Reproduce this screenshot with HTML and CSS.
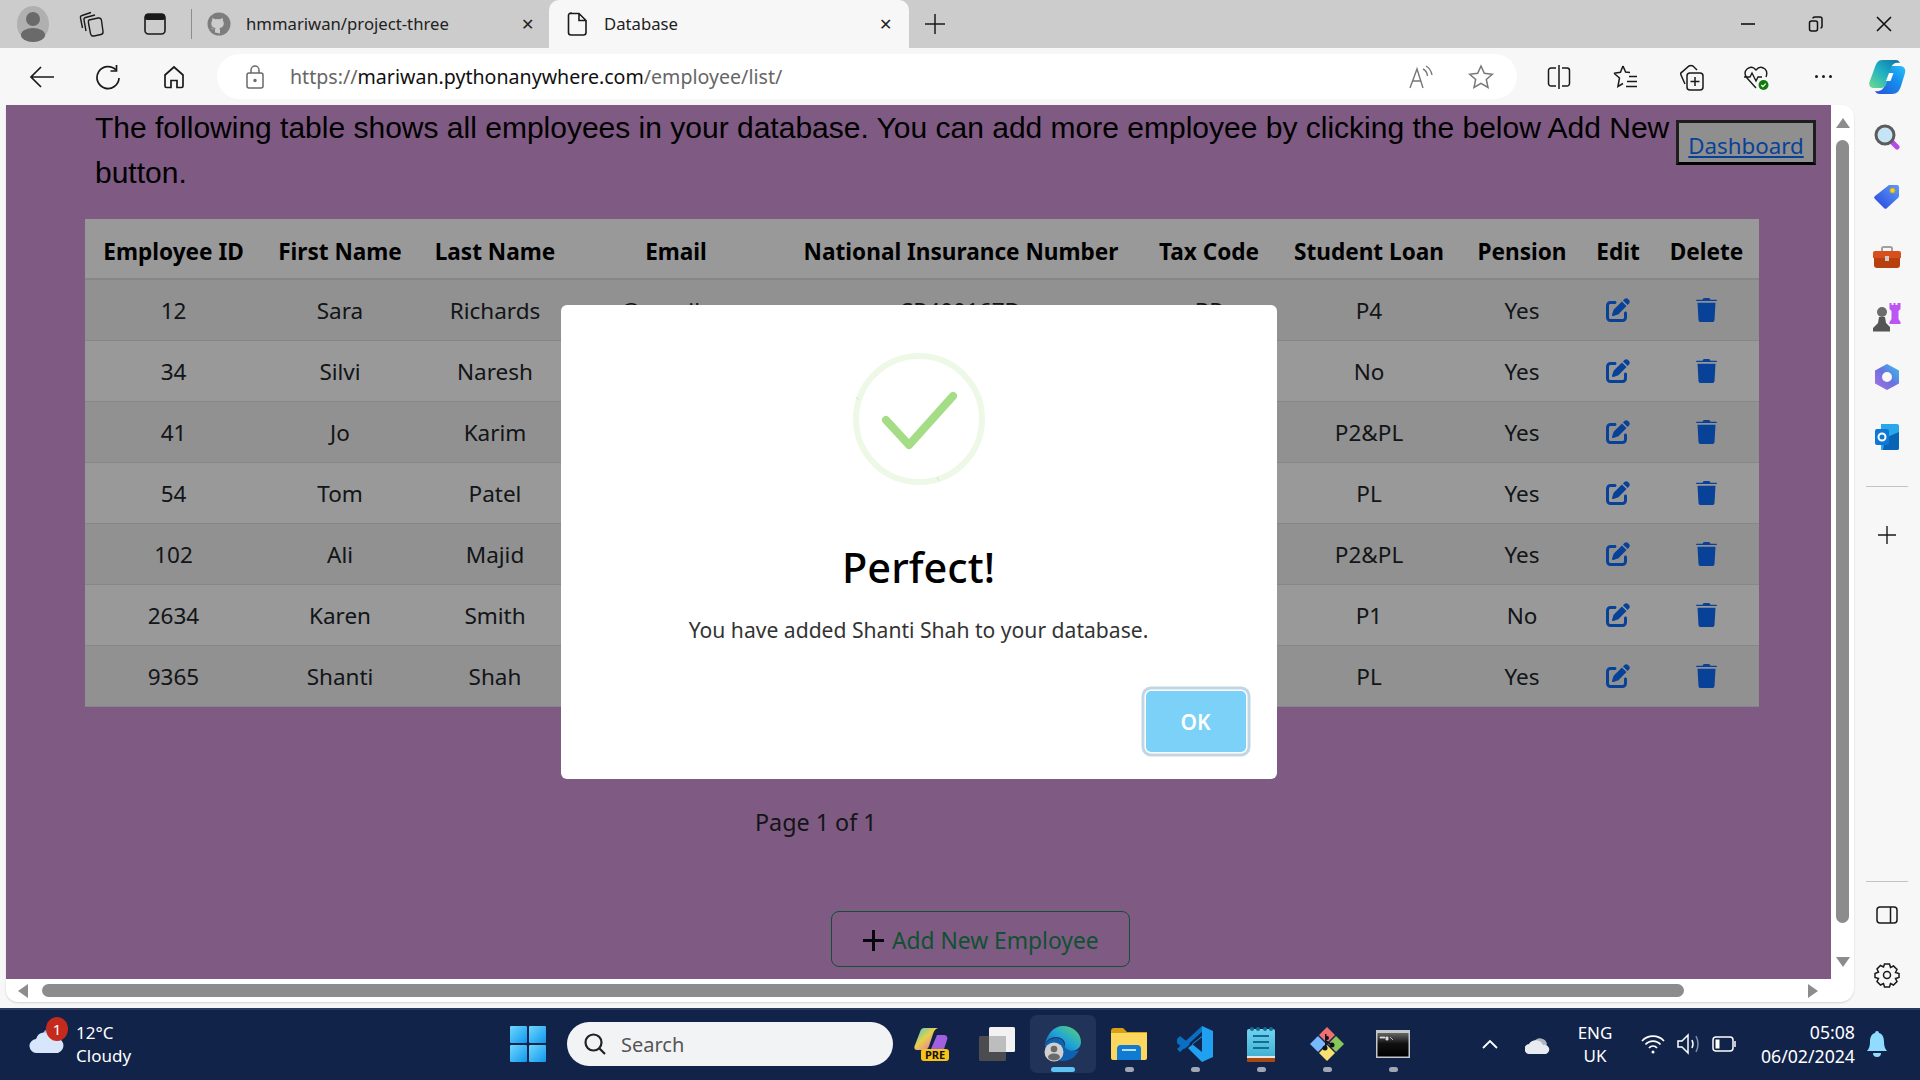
FILE: index.html
```html
<!DOCTYPE html>
<html>
<head>
  <meta charset="utf-8">
  <title>Database</title>
  <link rel="stylesheet" href="styles.css">
</head>
<body>
  <svg class="icon-defs" width="0" height="0">
    <defs>
      <symbol id="icon-edit" viewBox="0 0 512 512"><path fill="currentColor" d="M471.6 21.7c-21.9-21.9-57.3-21.9-79.2 0L362.3 51.7l97.9 97.9 30.1-30.1c21.9-21.9 21.9-57.3 0-79.2L471.6 21.7zm-299.2 220c-6.1 6.1-10.8 13.6-13.5 21.9l-29.6 88.8c-2.9 8.6-.6 18.1 5.8 24.6s15.9 8.7 24.6 5.8l88.8-29.6c8.2-2.7 15.7-7.4 21.9-13.5L437.7 172.3 339.7 74.3 172.4 241.7zM96 64C43 64 0 107 0 160V416c0 53 43 96 96 96H352c53 0 96-43 96-96V320c0-17.7-14.3-32-32-32s-32 14.3-32 32v96c0 17.7-14.3 32-32 32H96c-17.7 0-32-14.3-32-32V160c0-17.7 14.3-32 32-32h96c17.7 0 32-14.3 32-32s-14.3-32-32-32H96z"/></symbol>
      <symbol id="icon-trash" viewBox="0 0 448 512"><path fill="currentColor" d="M150 14L140 36H14C6 36 0 42 0 50s6 14 14 14H434c8 0 14-6 14-14s-6-14-14-14H308L298 14C294 5 285 0 275 0H173c-10 0-19 5-23 14zM416 100H32L53.2 467c1.6 25.3 22.6 45 47.9 45H346.9c25.3 0 46.3-19.7 47.9-45L416 100z"/></symbol>
      <linearGradient id="grad-copilot-a" x1="0" y1="1" x2="1" y2="0"><stop offset="0" stop-color="#6fdc8c"/><stop offset=".5" stop-color="#1fb0c4"/><stop offset="1" stop-color="#0f6fa5"/></linearGradient>
      <linearGradient id="grad-copilot-b" x1="0" y1="1" x2="1" y2="0"><stop offset="0" stop-color="#2a50d8"/><stop offset=".6" stop-color="#1590ee"/><stop offset="1" stop-color="#2cc0f5"/></linearGradient>
      <linearGradient id="grad-tag" x1="0" y1="1" x2="1" y2="0"><stop offset="0" stop-color="#2a45dc"/><stop offset="1" stop-color="#5c9cf8"/></linearGradient>
      <linearGradient id="grad-win" x1="0" y1="0" x2="1" y2="1"><stop offset="0" stop-color="#6fd8fb"/><stop offset="1" stop-color="#0f96f0"/></linearGradient>
      <linearGradient id="grad-edge" x1="0" y1="1" x2="1" y2="0"><stop offset="0" stop-color="#0c59a4"/><stop offset=".5" stop-color="#1fa4d8"/><stop offset="1" stop-color="#5ed66c"/></linearGradient>
      <linearGradient id="grad-m365" x1="0" y1="1" x2="1" y2="0"><stop offset="0" stop-color="#b070e0"/><stop offset=".5" stop-color="#6a70e0"/><stop offset="1" stop-color="#33c6ee"/></linearGradient>
      <linearGradient id="grad-note" x1="0" y1="0" x2="0" y2="1"><stop offset="0" stop-color="#72d2ee"/><stop offset="1" stop-color="#3eaed2"/></linearGradient>
      <linearGradient id="grad-term" x1="0" y1="0" x2="0" y2="1"><stop offset="0" stop-color="#666"/><stop offset=".45" stop-color="#111"/><stop offset="1" stop-color="#000"/></linearGradient>
      <linearGradient id="grad-pre" x1="0" y1="0" x2="1" y2="1"><stop offset="0" stop-color="#3cc8d8"/><stop offset=".45" stop-color="#e8d04a"/><stop offset="1" stop-color="#e060c8"/></linearGradient>
    </defs>
  </svg>

  <div class="window">
    <header class="tabbar">
      <div class="tab-tool tool-profile">
        <svg width="32" height="36" viewBox="0 0 32 36"><ellipse cx="16" cy="18" rx="16" ry="18" fill="#b0b0b0"/><circle cx="16" cy="13" r="7" fill="#6a6a6a"/><ellipse cx="16" cy="29" rx="12" ry="7" fill="#6a6a6a"/></svg>
      </div>
      <div class="tab-tool tool-collections">
        <svg width="26" height="26" viewBox="0 0 26 26" fill="none" stroke="#1a1a1a" stroke-width="1.400"><path d="M10 9l9-2q3-.5 3.500 2.500l1.500 11q.3 2.500-2 3l-7 1.500q-3 .5-3.500-2.500L9.500 12Q9 9.500 10 9z"/><path d="M7 20 5 9q-.5-2 1.500-2.500L16 4"/><path d="M3.500 17 1.500 7q-.5-2 1.500-2.500L12 1.500"/></svg>
      </div>
      <div class="tab-tool tool-tabs">
        <svg width="22" height="22" viewBox="0 0 22 22"><rect x="1" y="1" width="20" height="20" rx="3.500" fill="none" stroke="#1a1a1a" stroke-width="1.600"/><rect x="1" y="1" width="20" height="6" rx="2" fill="#1a1a1a"/></svg>
      </div>
      <div class="tab tab-inactive">
        <svg width="24" height="24" viewBox="0 0 24 24"><circle cx="12" cy="12" r="11.500" fill="#7d7d7d"/><path fill="#ccc" d="M8 20.500v-3c-3 .6-3.700-1.300-4-2 .5.300 1.500.700 2.200 1.700.7.900 1.600.7 1.900.4.100-.7.400-1.200.7-1.500-2.500-.3-4.500-1.300-4.500-4.800 0-1 .4-1.900 1-2.500-.1-.3-.4-1.300.1-2.500 0 0 .9-.3 2.700 1a9 9 0 0 1 4.900 0c1.800-1.300 2.700-1 2.700-1 .5 1.200.2 2.200.1 2.500.6.600 1 1.500 1 2.500 0 3.500-2.100 4.500-4.500 4.800.4.300.7.900.7 1.800v3.500z"/></svg>
        <span class="tab-title">hmmariwan/project-three</span>
        <span class="tab-close">✕</span>
      </div>
      <div class="tab tab-active">
        <svg width="22" height="24" viewBox="0 0 22 24" fill="none" stroke="#1a1a1a" stroke-width="1.600"><path d="M4 1.500h8l7 7v12a2.500 2.500 0 0 1-2.500 2.500h-12.500a2.500 2.500 0 0 1-2.500-2.500v-17a2.500 2.500 0 0 1 2.500-2.500zM12 1.500v7h7"/></svg>
        <span class="tab-title">Database</span>
        <span class="tab-close">✕</span>
      </div>
      <div class="tab-tool tool-new">
        <svg width="22" height="22" viewBox="0 0 22 22" stroke="#1a1a1a" stroke-width="1.500"><path d="M11 1v20M1 11h20"/></svg>
      </div>
      <div class="window-controls">
        <div class="win-btn"><svg width="14" height="14" viewBox="0 0 14 14" stroke="#111" stroke-width="1.600"><path d="M0 7h14"/></svg></div>
        <div class="win-btn"><svg width="16" height="16" viewBox="0 0 16 16" fill="none" stroke="#111" stroke-width="1.500"><rect x="1.500" y="5" width="8" height="10" rx="2"/><path d="M5 2.500q0-1.500 2-1.500h5q2 0 2 2v7q0 2-1.500 2"/></svg></div>
        <div class="win-btn"><svg width="16" height="16" viewBox="0 0 16 16" stroke="#111" stroke-width="1.600"><path d="M1 1l14 14M15 1L1 15"/></svg></div>
      </div>
    </header>

    <nav class="toolbar">
      <div class="nav-btn"><svg width="26" height="24" viewBox="0 0 26 24" fill="none" stroke="#1a1a1a" stroke-width="1.700"><path d="M25 12H2M12 2 2 12l10 10"/></svg></div>
      <div class="nav-btn"><svg width="24" height="26" viewBox="0 0 24 26" fill="none" stroke="#1a1a1a" stroke-width="1.700"><path d="M20 6A11 11 0 1 0 23 14"/><path d="M20.500 1v6h-6"/></svg></div>
      <div class="nav-btn"><svg width="24" height="24" viewBox="0 0 24 24" fill="none" stroke="#1a1a1a" stroke-width="1.700"><path d="M3 10 12 2l9 8v11a1.500 1.500 0 0 1-1.500 1.500H15v-7H9v7H4.500A1.500 1.500 0 0 1 3 21z"/></svg></div>
      <div class="address">
        <svg class="lock" width="18" height="24" viewBox="0 0 18 24" fill="none" stroke="#6a6a6a" stroke-width="1.500"><rect x="1" y="8" width="16" height="15" rx="2"/><path d="M5 8V5a4 4 0 0 1 8 0v3"/><circle cx="9" cy="15.500" r="1" fill="#6a6a6a"/></svg>
        <span class="url"><span class="url-dim">https://</span>mariwan.pythonanywhere.com<span class="url-dim">/employee/list/</span></span>
        <svg class="read-aloud" width="26" height="24" viewBox="0 0 26 24" fill="none" stroke="#777" stroke-width="1.400"><path d="M2 23 9 4l6 19M4.500 16h9"/><path d="M15 4q4 2 4.500 7M18 1q5 3 6 9"/></svg>
        <svg class="star" width="26" height="26" viewBox="0 0 26 26" fill="none" stroke="#777" stroke-width="1.500"><path d="M13 2l3.300 7.300 8 .9-6 5.300 1.700 7.900-7-4-7 4 1.700-7.900-6-5.300 8-.9z"/></svg>
      </div>
      <div class="toolbar-right">
        <div class="nav-btn"><svg width="24" height="24" viewBox="0 0 24 24" fill="none" stroke="#1a1a1a" stroke-width="1.500"><path d="M12 0v24M9 3H4a2.500 2.500 0 0 0-2.500 2.500v13A2.500 2.500 0 0 0 4 21h5M15 3h5a2.500 2.500 0 0 1 2.500 2.500v13A2.500 2.500 0 0 1 20 21h-5"/></svg></div>
        <div class="nav-btn"><svg width="26" height="26" viewBox="0 0 26 26" fill="none" stroke="#1a1a1a" stroke-width="1.500"><path d="M11 2l2.600 6 4.400.5M2 9.300l5.500 4.700-1.600 8.500 5.100-3M11 2 8.400 8.300 2 9.300M17 12.500h8M15 17.500h10M14 22.500h11"/></svg></div>
        <div class="nav-btn"><svg width="26" height="28" viewBox="0 0 26 28" fill="none" stroke="#1a1a1a" stroke-width="1.500"><path d="M7 21 3 12q-1-2 1-3l7-6q2-1 4 0l4 4"/><rect x="9" y="10" width="16" height="17" rx="3"/><path d="M17 14v9M12.500 18.500h9"/></svg></div>
        <div class="nav-btn"><svg width="28" height="28" viewBox="0 0 28 28" fill="none"><path stroke="#1a1a1a" stroke-width="1.400" d="M13 25 4 15q-4-5 0-9 5-4 9 1 4-5 9-1 3 3 1 8M1 14h6l2-4 4 8 2-4h4"/><circle cx="20.500" cy="22" r="5" fill="#107c10"/><path stroke="#fff" stroke-width="1.200" d="M18.300 22l1.600 1.600 2.800-3"/></svg></div>
        <div class="nav-btn nav-dots"><i></i><i></i><i></i></div>
        <div class="nav-btn nav-copilot">
          <svg width="37" height="34" viewBox="0 0 37 34"><path fill="url(#grad-copilot-b)" d="M22 6h9c4 0 6 3 5 7l-4 13c-1.500 5-4 8-9 8H11c-3 0-4-1-5-3 5 1 8-1 10-6l4-14c.5-2 1-4 2-5z"/><path fill="url(#grad-copilot-a)" d="M13 0h14c2 0 3 1 4 3-5-1-8 1-9 5l-5 17c-1 2-3 3-5 3H4c-3 0-4.500-3-3.500-6L6 7c1.500-4 3-7 7-7z"/><path fill="#fff" d="M20 13h4.500l-3 8H17z"/></svg>
        </div>
      </div>
    </nav>

    <div class="main">
      <div class="view-wrap">
        <div class="browser-view">
          <section class="page">
            <a class="dashboard-btn" href="#">Dashboard</a>
            <p class="intro">The following table shows all employees in your database. You can add more employee by clicking the below Add New button.</p>

            <table class="employee-table">
              <colgroup>
                <col class="col-id"><col class="col-first"><col class="col-last"><col class="col-email"><col class="col-ni">
                <col class="col-tax"><col class="col-loan"><col class="col-pension"><col class="col-edit"><col class="col-delete">
              </colgroup>
              <thead>
                <tr><th>Employee ID</th><th>First Name</th><th>Last Name</th><th>Email</th><th>National Insurance Number</th><th>Tax Code</th><th>Student Loan</th><th>Pension</th><th>Edit</th><th>Delete</th></tr>
              </thead>
              <tbody>
                <tr><td>12</td><td>Sara</td><td>Richards</td><td>sr@gmail.com</td><td>SR400167D</td><td>BR</td><td>P4</td><td>Yes</td><td><svg class="act-edit"><use href="#icon-edit"/></svg></td><td><svg class="act-trash"><use href="#icon-trash"/></svg></td></tr>
                <tr><td>34</td><td>Silvi</td><td>Naresh</td><td></td><td></td><td></td><td>No</td><td>Yes</td><td><svg class="act-edit"><use href="#icon-edit"/></svg></td><td><svg class="act-trash"><use href="#icon-trash"/></svg></td></tr>
                <tr><td>41</td><td>Jo</td><td>Karim</td><td></td><td></td><td></td><td>P2&amp;PL</td><td>Yes</td><td><svg class="act-edit"><use href="#icon-edit"/></svg></td><td><svg class="act-trash"><use href="#icon-trash"/></svg></td></tr>
                <tr><td>54</td><td>Tom</td><td>Patel</td><td></td><td></td><td></td><td>PL</td><td>Yes</td><td><svg class="act-edit"><use href="#icon-edit"/></svg></td><td><svg class="act-trash"><use href="#icon-trash"/></svg></td></tr>
                <tr><td>102</td><td>Ali</td><td>Majid</td><td></td><td></td><td></td><td>P2&amp;PL</td><td>Yes</td><td><svg class="act-edit"><use href="#icon-edit"/></svg></td><td><svg class="act-trash"><use href="#icon-trash"/></svg></td></tr>
                <tr><td>2634</td><td>Karen</td><td>Smith</td><td></td><td></td><td></td><td>P1</td><td>No</td><td><svg class="act-edit"><use href="#icon-edit"/></svg></td><td><svg class="act-trash"><use href="#icon-trash"/></svg></td></tr>
                <tr><td>9365</td><td>Shanti</td><td>Shah</td><td></td><td></td><td></td><td>PL</td><td>Yes</td><td><svg class="act-edit"><use href="#icon-edit"/></svg></td><td><svg class="act-trash"><use href="#icon-trash"/></svg></td></tr>
              </tbody>
            </table>

            <p class="pagination">Page 1 of 1</p>
            <a class="add-btn" href="#"><svg width="21" height="21" viewBox="0 0 21 21" stroke="#0a0a14" stroke-width="3"><path d="M10.500 0v21M0 10.500h21"/></svg>Add New Employee</a>

            <div class="overlay">
              <div class="modal">
                <svg class="success-icon" width="132" height="132" viewBox="0 0 132 132" fill="none">
                  <circle cx="66" cy="66" r="63" stroke="#edf8e7" stroke-width="6"/>
                  <path d="M3 44l3 3M84 124l2 4" stroke="#cfeec0" stroke-width="1"/>
                  <path d="M33 67 56 92 100 43" stroke="#a5dc86" stroke-width="8" stroke-linecap="round" stroke-linejoin="round"/>
                </svg>
                <h2 class="modal-title">Perfect!</h2>
                <p class="modal-text">You have added Shanti Shah to your database.</p>
                <button class="modal-ok" type="button">OK</button>
              </div>
            </div>
          </section>

          <div class="vscroll">
            <span class="arrow-up"></span>
            <span class="vthumb"></span>
            <span class="arrow-down"></span>
          </div>
          <div class="hscroll">
            <span class="arrow-left"></span>
            <span class="hthumb"></span>
            <span class="arrow-right"></span>
          </div>
        </div>
      </div>

      <aside class="sidebar">
        <div class="side-item"><svg width="26" height="26" viewBox="0 0 26 26"><path stroke="#b84ae8" stroke-width="5" stroke-linecap="round" d="M17 17l6 6"/><circle cx="11" cy="11" r="9" fill="#c6e4f6" stroke="#5c5c5c" stroke-width="3"/></svg></div>
        <div class="side-item"><svg width="26" height="26" viewBox="0 0 26 26"><path fill="url(#grad-tag)" d="M15 1h8a2 2 0 0 1 2 2v9a3 3 0 0 1-1 2L13 24a2 2 0 0 1-3 0L1 15a2 2 0 0 1 0-3z"/><circle cx="18.500" cy="6.500" r="2.500" fill="#f4d02a" stroke="#d8a810"/></svg></div>
        <div class="side-item"><svg width="28" height="22" viewBox="0 0 28 22"><path fill="none" stroke="#a0a0a0" stroke-width="2" d="M9 5V2.500q0-1.500 1.500-1.500h7Q19 1 19 2.500V5"/><path fill="#d64f1c" d="M2 5h24a2 2 0 0 1 2 2v5H0V7a2 2 0 0 1 2-2z"/><path fill="#b8400f" d="M1 12h26v7a3 3 0 0 1-3 3H4a3 3 0 0 1-3-3z"/><rect x="12" y="10" width="4" height="5" fill="#ccc"/></svg></div>
        <div class="side-item"><svg width="28" height="29" viewBox="0 0 28 29"><path fill="#bd55f5" d="M16.500 0h2v2h2V0h2v2h2V0h3v6l-2 2v8l2 3v2H16.500v-2l2-3V8l-2-2z"/><circle cx="9" cy="9" r="5" fill="#6c6c6c"/><path fill="#555" d="M6 14h6l1 6 4 4v4.500H0V25l5-5z"/></svg></div>
        <div class="side-item"><svg width="24" height="26" viewBox="0 0 24 26"><path fill="url(#grad-m365)" fill-rule="evenodd" d="M12 0 24 6.500v13L12 26 0 19.500v-13zM12 8a5 5 0 1 0 0 10 5 5 0 0 0 0-10z"/></svg></div>
        <div class="side-item"><svg width="24" height="26" viewBox="0 0 24 26"><path fill="#28a8ea" d="M6 0h16q2 0 2 2v22q0 2-2 2H6z"/><path fill="#0a64b4" d="M10 14l14-6v16q0 2-2 2H8z"/><rect x="0" y="5" width="14" height="16" rx="2" fill="#0f78d4"/><circle cx="7" cy="13" r="3.500" fill="none" stroke="#fff" stroke-width="2"/></svg></div>
        <div class="side-sep side-sep-top"></div>
        <div class="side-item"><svg width="20" height="20" viewBox="0 0 20 20" stroke="#1a1a1a" stroke-width="1.400"><path d="M10 1v18M1 10h18"/></svg></div>
        <div class="side-sep side-sep-bottom"></div>
        <div class="side-item"><svg width="22" height="18" viewBox="0 0 22 18" fill="none" stroke="#1a1a1a" stroke-width="1.500"><rect x="1" y="1" width="20" height="16" rx="3"/><path d="M14.500 1v16"/></svg></div>
        <div class="side-item"><svg width="26" height="26" viewBox="0 0 26 26" fill="none" stroke="#1a1a1a" stroke-width="1.500"><path d="M10.500 2h5l1 3.500 3-1.500 3.500 3.500-1.500 3L25 11.500v4l-3.500 1 1.500 3-3.500 3.500-3-1.500-1 3.500h-5l-1-3.500-3 1.500L3 19.500l1.500-3L1 15.500v-4l3.500-1.500L3 7l3.500-3.500 3 1.500z"/><circle cx="13" cy="13" r="3.500"/></svg></div>
      </aside>
    </div>

    <footer class="taskbar">
      <div class="weather">
        <svg class="weather-icon" width="36" height="26" viewBox="0 0 36 26"><circle cx="22" cy="10" r="9" fill="#8ab6ee"/><path fill="#d8e6fb" d="M8 26a7 7 0 0 1-1-14 9 9 0 0 1 17-1 7.500 7.500 0 0 1 5 15z"/></svg>
        <span class="weather-badge">1</span>
        <div class="weather-text"><span>12°C</span><span>Cloudy</span></div>
      </div>
      <div class="start"><svg width="36" height="36" viewBox="0 0 36 36" fill="url(#grad-win)"><rect width="17" height="17" rx="1"/><rect x="19" width="17" height="17" rx="1"/><rect y="19" width="17" height="17" rx="1"/><rect x="19" y="19" width="17" height="17" rx="1"/></svg></div>
      <div class="search">
        <svg width="24" height="24" viewBox="0 0 24 24" fill="none" stroke="#222" stroke-width="2.200"><circle cx="10.500" cy="10.500" r="8"/><path d="M16.500 16.500 22 22"/></svg>
        <span>Search</span>
      </div>
      <div class="apps">
        <div class="app">
          <svg width="36" height="36" viewBox="0 0 36 36"><path fill="url(#grad-pre)" d="M11 2h14c-3 1-4 3-5 6l-4 12c-1 3-3 4-5 4H4c-3 0-3-3-2-5L7 6c1-3 2-4 4-4z"/><path fill="#a060e0" d="M24 9h7c3 0 4 3 3 5l-3 9H18z"/><rect x="8" y="23" width="28" height="12" rx="3" fill="#f7c318"/><text class="pre-label" x="22" y="33" text-anchor="middle">PRE</text></svg>
        </div>
        <div class="app">
          <svg width="36" height="34" viewBox="0 0 36 34"><rect x="10" y="0" width="26" height="25" rx="1.500" fill="#f2f2f2"/><rect x="0" y="9" width="27" height="25" rx="1.500" fill="#4f4f4f" opacity=".95"/><rect x="10" y="9" width="17" height="16" fill="#bdbdbd"/></svg>
        </div>
        <div class="app app-active">
          <svg width="38" height="38" viewBox="0 0 38 38"><path fill="url(#grad-edge)" d="M19 1c10 0 18 7 18 16 0 6-5 9-10 9-4 0-7-2-7-4 0-1 1-1 1-3 0-4-4-7-9-7-5 0-9 3-11 7C3 9 10 1 19 1z"/><path fill="#0e62b0" d="M1 19c3-4 7-6 11-6 5 0 8 3 8 6 0 4 4 7 9 7 2 0 4 0 6-1-3 7-9 11-16 11S1 30 1 19z"/><circle cx="10" cy="27" r="9.500" fill="#d0d0d0"/><circle cx="10" cy="24" r="3.300" fill="#6a6a6a"/><ellipse cx="10" cy="32" rx="6" ry="3.500" fill="#6a6a6a"/></svg>
          <span class="app-active-bar"></span>
        </div>
        <div class="app app-open">
          <svg width="36" height="32" viewBox="0 0 36 32"><path fill="#d9a015" d="M0 3a3 3 0 0 1 3-3h9l4 4h20v6H0z"/><path fill="#fcd75e" d="M0 5h36v25a2 2 0 0 1-2 2H2a2 2 0 0 1-2-2z"/><path fill="#0f7bd2" d="M6 32V21a4 4 0 0 1 4-4h16a4 4 0 0 1 4 4v11z"/><rect x="11" y="21" width="14" height="2" fill="#b8def8"/></svg>
          <span class="app-dot"></span>
        </div>
        <div class="app app-open">
          <svg width="36" height="36" viewBox="0 0 36 36"><path fill="#0a6fc0" d="M0 13l3-3 10 8-3 3-3 2-7-6zM3 26 0 23 25 0l3 3z"/><path fill="#1fa0f0" d="M25 0l11 5v26l-11 5-14-14 14-11z M25 10 15 18l10 8z" fill-rule="evenodd"/></svg>
          <span class="app-dot"></span>
        </div>
        <div class="app app-open">
          <svg width="28" height="36" viewBox="0 0 28 36"><rect x="0" y="3" width="28" height="30" rx="2" fill="url(#grad-note)"/><rect x="0" y="31" width="28" height="5" rx="1" fill="#a84a10"/><rect x="0" y="30" width="28" height="2" fill="#e8e8e8"/><g fill="#0f6e96"><circle cx="5" cy="3" r="2"/><circle cx="11" cy="3" r="2"/><circle cx="18" cy="3" r="2"/><circle cx="24" cy="3" r="2"/><rect x="6" y="9" width="16" height="2"/><rect x="6" y="15" width="16" height="2"/><rect x="6" y="21" width="16" height="2"/></g></svg>
          <span class="app-dot"></span>
        </div>
        <div class="app app-open">
          <svg width="36" height="36" viewBox="0 0 36 36"><path fill="#f07070" d="M18 1 26 9l-8 8-8-8 6-6z"/><path fill="#78b8ff" d="M1 18l8-8 8 8-8 8z"/><path fill="#88c858" d="M19 18l8-8 8 8-8 8z"/><path fill="#f8e070" d="M10 27l8-8 8 8-8 8z"/><g fill="#112"><circle cx="18" cy="12" r="2"/><circle cx="16" cy="22" r="2.500"/><circle cx="23" cy="19" r="2.500"/><path d="M16 8h1.500v14H16zM17 14l6 4-1 1.500-5-3.500z"/></g></svg>
          <span class="app-dot"></span>
        </div>
        <div class="app app-open">
          <svg width="34" height="28" viewBox="0 0 34 28"><rect width="34" height="28" fill="#c4c8cc"/><rect x="1.500" y="3" width="31" height="23.500" fill="url(#grad-term)"/><path d="M4 7h5v1H4zM10 7h2v3h-2zM14 7l3 3" stroke="#ddd" stroke-width=".8" fill="#ddd"/></svg>
          <span class="app-dot"></span>
        </div>
      </div>
      <div class="tray">
        <svg class="tray-chevron" width="16" height="10" viewBox="0 0 16 10" fill="none" stroke="#fff" stroke-width="1.800"><path d="M1 9l7-7 7 7"/></svg>
        <svg class="tray-cloud" width="26" height="20" viewBox="0 0 26 20"><path fill="#aeb6c4" d="M9 8a7 7 0 0 1 13 2l-3 4H7z"/><path fill="#e8ebf0" d="M5 20a5 5 0 0 1-1-10 8 8 0 0 1 14 1 4.500 4.500 0 0 1 3 9z"/></svg>
        <div class="tray-lang"><span>ENG</span><span>UK</span></div>
        <svg class="tray-wifi" width="24" height="20" viewBox="0 0 24 20" fill="none" stroke="#fff" stroke-width="1.700"><path d="M1 7a15 15 0 0 1 22 0M4.500 10.500a10 10 0 0 1 15 0M8 14a5 5 0 0 1 8 0"/><circle cx="12" cy="18" r="1.500" fill="#fff" stroke="none"/></svg>
        <svg class="tray-sound" width="24" height="24" viewBox="0 0 24 24" fill="none" stroke="#fff" stroke-width="1.500"><path d="M1 9h4l6-6v18l-6-6H1z"/><path d="M15 8q2 4 0 8"/><path d="M19 4q4 8 0 16" stroke="#8290a8"/></svg>
        <svg class="tray-battery" width="24" height="16" viewBox="0 0 24 16" fill="none" stroke="#fff" stroke-width="1.500"><rect x="1" y="1" width="20" height="14" rx="3"/><rect x="3.500" y="3.500" width="4" height="9" fill="#fff" stroke="none"/><path d="M23 5v6"/></svg>
        <div class="tray-clock"><span>05:08</span><span>06/02/2024</span></div>
        <svg class="tray-bell" width="22" height="26" viewBox="0 0 22 26"><path fill="#8fdcff" d="M11 0a2 2 0 0 1 2 2c4 1 5 5 5 9 0 4 1 7 3 9H1c2-2 3-5 3-9 0-4 1-8 5-9a2 2 0 0 1 2-2z"/><path fill="#8fdcff" d="M7 22h8a4 4 0 0 1-8 0z"/></svg>
      </div>
    </footer>
  </div>
</body>
</html>
```

FILE: styles.css
```css
* {
  box-sizing: border-box;
}
html, body {
  margin: 0;
  padding: 0;
  height: 100%;
  overflow: hidden;
}
body {
  font-family: "Noto Sans", "Open Sans", sans-serif;
  color: #000;
}
.icon-defs {
  position: absolute;
}
.window {
  width: 1920px;
  height: 1080px;
  display: flex;
  flex-direction: column;
}

/* tab strip */
.tabbar {
  display: flex;
  align-items: stretch;
  height: 48px;
  background: #cccccc;
  flex-shrink: 0;
}
.tab-tool {
  display: flex;
  align-items: center;
  justify-content: center;
}
.tool-profile { width: 66px; }
.tool-collections { width: 52px; }
.tool-tabs {
  width: 74px;
  border-right: 1px solid #8e8e8e;
  margin: 9px 0;
}
.tool-new { width: 52px; }
.tab {
  display: flex;
  align-items: center;
  font-size: 16.700px;
  color: #222;
}
.tab-inactive {
  width: 357px;
  padding: 0 15px 0 15px;
}
.tab-active {
  width: 360px;
  padding: 0 17px 0 18px;
  background: #f7f7f7;
  border-radius: 10px 10px 0 0;
}
.tab-title {
  margin-left: 15px;
  padding-bottom: 2px;
}
.tab-close {
  margin-left: auto;
  font-size: 16px;
}
.window-controls {
  display: flex;
  margin-left: auto;
  padding-right: 2px;
}
.win-btn {
  width: 68px;
  display: flex;
  align-items: center;
  justify-content: center;
}

/* address row */
.toolbar {
  display: flex;
  align-items: center;
  height: 57px;
  padding-left: 9px;
  background: #f7f7f7;
  flex-shrink: 0;
}
.nav-btn {
  width: 66px;
  height: 45px;
  display: flex;
  align-items: center;
  justify-content: center;
  flex-shrink: 0;
}
.address {
  display: flex;
  align-items: center;
  width: 1300px;
  height: 45px;
  margin-left: 10px;
  padding: 0 23px 0 29px;
  background: #fff;
  border-radius: 23px;
}
.url {
  margin-left: 26px;
  font-size: 19.600px;
  color: #111;
}
.url-dim {
  color: #666;
}
.read-aloud {
  margin-left: auto;
}
.star {
  margin-left: 34px;
}
.toolbar-right {
  display: flex;
  margin-left: 9px;
}
.nav-dots {
  gap: 4px;
}
.nav-dots i {
  width: 3px;
  height: 3px;
  background: #1a1a1a;
  border-radius: 50%;
}
.nav-copilot {
  width: 62px;
}

/* page area */
.main {
  display: flex;
  flex: 1;
  min-height: 0;
  background: #f7f7f7;
}
.view-wrap {
  width: 1854px;
  padding: 0 0 6px 6px;
}
.browser-view {
  display: grid;
  grid-template-columns: 1825px 23px;
  grid-template-rows: 874px 23px;
  height: 897px;
  background: #fff;
  border-radius: 0 12px 14px 12px;
  box-shadow: 0 1px 2px rgba(0, 0, 0, .15);
}
.page {
  position: relative;
  overflow: hidden;
  background: #d496da;
}
.dashboard-btn {
  float: right;
  margin: 15px 15px 0 0;
  width: 140px;
  height: 45px;
  line-height: 45px;
  text-align: center;
  font-size: 22.300px;
  color: #0d6efd;
  background: #efefef;
  border: 3px solid #333;
  border-bottom-color: #000;
}
.intro {
  margin: 0 0 24px 89px;
  font-family: "Liberation Sans", Arial, sans-serif;
  font-size: 30px;
  line-height: 45px;
}
.employee-table {
  width: 1674px;
  margin-left: 79px;
  border-collapse: collapse;
  table-layout: fixed;
  background: #fff;
  font-size: 22.500px;
  text-align: center;
  color: #212529;
}
.employee-table tr {
  height: 61px;
}
.employee-table thead tr {
  height: 60px;
}
.employee-table th {
  padding: 5px 0 0;
  font-size: 22.600px;
  color: #000;
  font-weight: 700;
  border-bottom: 2px solid #dee2e6;
}
.employee-table td {
  padding: 2px 0 0;
  border-bottom: 1px solid #dee2e6;
}
.employee-table tbody tr:nth-child(odd) {
  background: #f2f2f2;
}
.col-id { width: 177px; }
.col-first { width: 156px; }
.col-last { width: 154px; }
.col-email { width: 208px; }
.col-ni { width: 362px; }
.col-tax { width: 134px; }
.col-loan { width: 186px; }
.col-pension { width: 120px; }
.col-edit { width: 72px; }
.col-delete { width: 105px; }
.act-edit {
  width: 24px;
  height: 24px;
  color: #0d6efd;
  vertical-align: -3px;
}
.act-trash {
  width: 21px;
  height: 24px;
  color: #0d6efd;
  vertical-align: -3px;
}
.pagination {
  margin: 97px 0 0 749px;
  font-size: 23.300px;
  line-height: 36px;
  color: #212529;
}
.add-btn {
  display: flex;
  align-items: center;
  width: 299px;
  height: 56px;
  margin: 71px 0 0 825px;
  padding: 3px 0 0 31px;
  gap: 8px;
  font-size: 22.800px;
  color: #198754;
  text-decoration: none;
  border: 1px solid #198754;
  border-radius: 8px;
}

/* success dialog */
.overlay {
  position: absolute;
  inset: 0;
  display: flex;
  align-items: center;
  justify-content: center;
  background: rgba(0, 0, 0, .4);
}
.modal {
  display: flex;
  flex-direction: column;
  align-items: center;
  width: 716px;
  height: 474px;
  padding-top: 48px;
  background: #fff;
  border-radius: 6px;
}
.modal-title {
  margin: 52px 0 0;
  font-size: 41.500px;
  line-height: 60px;
  font-weight: 500;
  color: #000;
}
.modal-text {
  margin: 19px 0 0;
  font-size: 21.100px;
  line-height: 28px;
  color: #333;
}
.modal-ok {
  align-self: flex-end;
  width: 100px;
  height: 61px;
  margin: 47px 31px 0 0;
  font-family: inherit;
  font-size: 21px;
  font-weight: 600;
  color: #fff;
  background: #7cd1f9;
  border: 0;
  border-radius: 5px;
  box-shadow: 0 0 0 1.500px #fff, 0 0 0 4.500px rgba(43, 114, 165, .29);
}

/* scrollbars */
.vscroll {
  display: flex;
  flex-direction: column;
  align-items: center;
  padding-top: 13px;
}
.vthumb {
  width: 13px;
  height: 783px;
  margin: 12px 0 34px;
  background: #8c8c8c;
  border-radius: 7px;
}
.arrow-up, .arrow-down, .arrow-left, .arrow-right {
  width: 0;
  height: 0;
  border-style: solid;
  border-color: transparent;
}
.arrow-up {
  border-width: 0 7px 10px;
  border-bottom-color: #8c8c8c;
}
.arrow-down {
  border-width: 10px 7px 0;
  border-top-color: #8c8c8c;
}
.hscroll {
  display: flex;
  align-items: center;
  padding-left: 12px;
}
.hthumb {
  width: 1642px;
  height: 13px;
  margin: 0 124px 0 14px;
  background: #8c8c8c;
  border-radius: 7px;
}
.arrow-left {
  border-width: 7px 10px 7px 0;
  border-right-color: #8c8c8c;
}
.arrow-right {
  border-width: 7px 0 7px 10px;
  border-left-color: #8c8c8c;
}

/* right side rail */
.sidebar {
  display: flex;
  flex-direction: column;
  align-items: center;
  width: 66px;
  padding: 2px 0 3px;
}
.side-item {
  display: flex;
  align-items: center;
  justify-content: center;
  height: 60px;
  width: 100%;
  flex-shrink: 0;
}
.side-sep {
  width: 42px;
  height: 1px;
  background: #c4c4c4;
  flex-shrink: 0;
}
.side-sep-top {
  margin: 19px 0 18px;
}
.side-sep-bottom {
  margin-top: auto;
  margin-bottom: 3px;
}

/* windows taskbar */
.taskbar {
  display: flex;
  align-items: center;
  position: relative;
  height: 72px;
  padding-bottom: 2px;
  background: #12234a;
  border-top: 2px solid #2b3a5c;
  color: #fff;
  flex-shrink: 0;
}
.weather {
  position: relative;
  display: flex;
  align-items: center;
  width: 510px;
  padding-left: 29px;
}
.weather-icon {
  margin-bottom: 8px;
}
.weather-badge {
  position: absolute;
  left: 46px;
  top: -4px;
  width: 22px;
  height: 24px;
  line-height: 24px;
  text-align: center;
  font-size: 15px;
  background: #c42b1c;
  border-radius: 50%;
}
.weather-text {
  display: flex;
  flex-direction: column;
  margin-left: 11px;
  font-size: 17px;
  line-height: 23px;
}
.start {
  width: 57px;
  display: flex;
}
.search {
  display: flex;
  align-items: center;
  width: 326px;
  height: 44px;
  padding-left: 16px;
  gap: 14px;
  background: #f2f3f5;
  border-radius: 22px;
  color: #555;
  font-size: 20px;
}
.apps {
  display: flex;
  margin-left: 5px;
}
.app {
  position: relative;
  width: 66px;
  height: 58px;
  display: flex;
  align-items: center;
  justify-content: center;
}
.pre-label {
  font-size: 11px;
  font-weight: 700;
  fill: #111;
}
.app-active {
  background: #22335a;
  border-radius: 7px;
}
.app-active-bar {
  position: absolute;
  left: 21px;
  bottom: 1px;
  width: 24px;
  height: 5px;
  background: #5ec3f2;
  border-radius: 3px;
}
.app-dot {
  position: absolute;
  left: 29px;
  bottom: 1px;
  width: 9px;
  height: 5px;
  background: #a0a6b4;
  border-radius: 3px;
}
.tray {
  display: flex;
  align-items: center;
  margin-left: 56px;
}
.tray-cloud {
  margin-left: 27px;
}
.tray-lang {
  display: flex;
  flex-direction: column;
  align-items: center;
  width: 50px;
  margin-left: 19px;
  font-size: 17px;
  line-height: 23px;
}
.tray-wifi {
  margin-left: 21px;
}
.tray-sound {
  margin-left: 12px;
}
.tray-battery {
  margin-left: 11px;
}
.tray-clock {
  display: flex;
  flex-direction: column;
  align-items: flex-end;
  width: 119px;
  font-size: 17.700px;
  line-height: 24px;
}
.tray-bell {
  margin-left: 11px;
}
```
